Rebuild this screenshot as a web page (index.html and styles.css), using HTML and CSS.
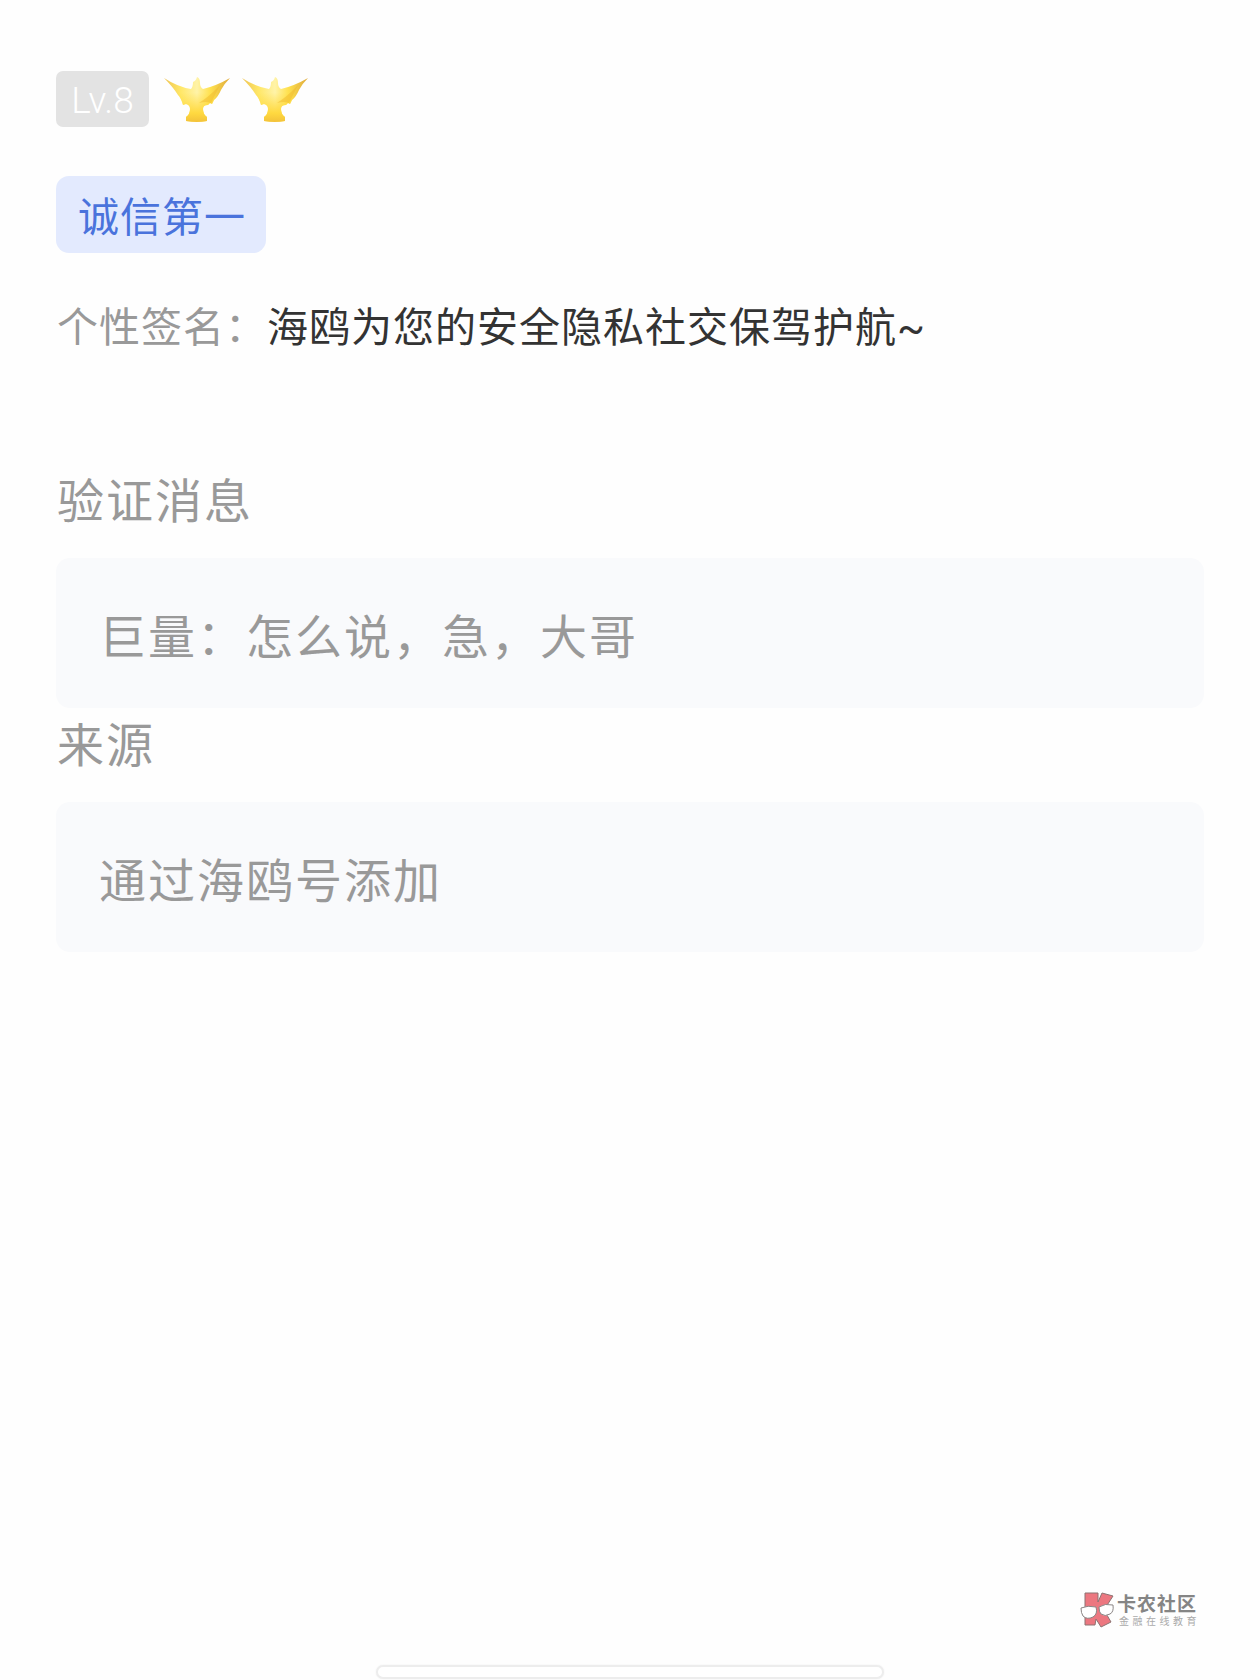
FILE: index.html
```html
<!DOCTYPE html>
<html lang="zh-CN">
<head>
    <meta charset="UTF-8">
    <meta name="viewport" content="width=device-width, initial-scale=1.0">
    <title>验证消息</title>
    <link rel="stylesheet" href="styles.css">
</head>
<body>

    <div class="container">
        <div class="level-row">
            <span class="level-badge">Lv.8</span>
            <svg class="bird" viewBox="0 0 66 45">
                <defs>
                    <linearGradient id="wing" x1="0" y1="0" x2="1" y2="0">
                        <stop offset="0" stop-color="#eec353"/>
                        <stop offset="0.25" stop-color="#ffe767"/>
                        <stop offset="0.5" stop-color="#fff3a8"/>
                        <stop offset="0.7" stop-color="#ffe14e"/>
                        <stop offset="1" stop-color="#dfaa3d"/>
                    </linearGradient>
                    <linearGradient id="tail" x1="0" y1="0" x2="0" y2="1">
                        <stop offset="0.35" stop-color="#ffdb3c" stop-opacity="0"/>
                        <stop offset="0.8" stop-color="#ffd940"/>
                        <stop offset="1" stop-color="#f3c23a"/>
                    </linearGradient>
                    <g id="bird">
                        <path fill="url(#wing)" d="M0 1 Q14 10 27 12 Q29 10 29 5 Q32 4 33 0 Q36 1 36 6 Q36 10 39 12 Q52 9 66 1 Q60 7 57 13 Q54 20 50 23 L48 27 L46 26 L44 28 Q39 28 39 32 Q39 37 43 40 L43 44 Q33 46 22 44 L22 40 Q26 37 26 32 Q26 28 22 27 L19 28 Q17 21 14 18 Q9 10 0 1Z"/>
                        <path fill="url(#tail)" d="M0 1 Q14 10 27 12 Q29 10 29 5 Q32 4 33 0 Q36 1 36 6 Q36 10 39 12 Q52 9 66 1 Q60 7 57 13 Q54 20 50 23 L48 27 L46 26 L44 28 Q39 28 39 32 Q39 37 43 40 L43 44 Q33 46 22 44 L22 40 Q26 37 26 32 Q26 28 22 27 L19 28 Q17 21 14 18 Q9 10 0 1Z"/>
                        <path fill="#f0b92e" opacity="0.5" d="M56 8 Q46 19 35 26 Q42 24 47 26 Q50 20 56 8Z"/>
                    </g>
                </defs>
                <use href="#bird"/>
            </svg>
            <svg class="bird" viewBox="0 0 66 45">
                <use href="#bird"/>
            </svg>
        </div>

        <div class="tag">诚信第一</div>

        <div class="signature">
            <span class="label">个性签名：</span><span>海鸥为您的安全隐私社交保驾护航<span class="tilde">~</span></span>
        </div>

        <div class="info-section">
            <h2>验证消息</h2>
            <div class="info-box">巨量：怎么说，急，大哥</div>
        </div>

        <div class="info-section">
            <h2>来源</h2>
            <div class="info-box">通过海鸥号添加</div>
        </div>
    </div>

    <!-- Watermark -->
    <div class="watermark">
        <svg class="watermark-logo" viewBox="0 0 34 36">
            <path fill="#ec7780" stroke="#8d7373" stroke-width="1" d="M5 1 L18 1 L18 10 L22 1 L33 4 L24 18 L31 30 L21 35 L16 27 L15 33 L5 33Z"/>
            <path fill="#fff" stroke="#8b8585" stroke-width="1" d="M1 16 Q8 13 16 15 Q18 22 13 25 Q7 28 3 24 Q1 21 1 16Z"/>
            <path fill="#fff" stroke="#8b8585" stroke-width="1" d="M19 15 Q25 11 33 13 Q34 20 30 22 Q25 25 21 22 Q19 20 19 15Z"/>
        </svg>
        <div class="watermark-text">
            <div class="watermark-name">卡农社区</div>
            <div class="watermark-sub">金融在线教育</div>
        </div>
    </div>

    <div class="home-bar"></div>

</body>
</html>
```

FILE: styles.css
```css
body {
    margin: 0;
    min-height: 1680px;
    position: relative;
    background-color: #fefefe;
    font-family: 'Noto Sans CJK SC', sans-serif;
    color: #333;
}

.container {
    padding: 71px 56px 0;
}

.level-row {
    display: flex;
    align-items: center;
    height: 56px;
}

.level-badge {
    width: 93px;
    height: 56px;
    margin-right: 15px;
    border-radius: 7px;
    background-color: #e3e3e3;
    color: #fff;
    font-family: Roboto, sans-serif;
    font-size: 37px;
    font-weight: 300;
    line-height: 60px;
    text-align: center;
}

.bird {
    width: 66px;
    height: 45px;
    margin-right: 12px;
}

.tag {
    width: 210px;
    height: 77px;
    box-sizing: border-box;
    padding-left: 22px;
    margin-top: 49px;
    border-radius: 13px;
    background-color: #e3eafe;
    color: #4a73dc;
    font-size: 41px;
    letter-spacing: 1px;
    line-height: 77px;
    white-space: nowrap;
}

.signature {
    margin-top: 41px;
    padding-left: 1px;
    height: 60px;
    font-size: 41px;
    letter-spacing: 1px;
    line-height: 60px;
    white-space: nowrap;
}

.signature .label {
    color: #999;
}

.signature .tilde {
    font-family: Roboto, sans-serif;
}

.signature + .info-section {
    margin-top: 110px;
}

.info-section h2 {
    margin: 0;
    padding-left: 1px;
    height: 94px;
    color: #999;
    font-size: 47px;
    font-weight: normal;
    letter-spacing: 2px;
    line-height: 67px;
}

.info-box {
    height: 150px;
    padding-left: 43px;
    border-radius: 14px;
    background-color: #f9fafc;
    color: #999;
    font-size: 47px;
    letter-spacing: 2px;
    line-height: 151px;
}

.watermark {
    position: absolute;
    left: 1080px;
    top: 1592px;
    display: flex;
}

.watermark-logo {
    width: 34px;
    height: 36px;
}

.watermark-text {
    margin-left: 3px;
    white-space: nowrap;
}

.watermark-name {
    color: #858585;
    font-size: 19px;
    font-weight: 700;
    letter-spacing: 1px;
    line-height: 22px;
}

.watermark-sub {
    margin-left: 2px;
    color: #aaa;
    font-size: 10px;
    letter-spacing: 3.500px;
    line-height: 14px;
}

.home-bar {
    position: absolute;
    left: 376px;
    top: 1665px;
    width: 508px;
    height: 14px;
    box-sizing: border-box;
    border: 2px solid #ededed;
    border-radius: 7px;
    background-color: #fff;
    box-shadow: 0 0 2px #f0f0f0;
}
```
